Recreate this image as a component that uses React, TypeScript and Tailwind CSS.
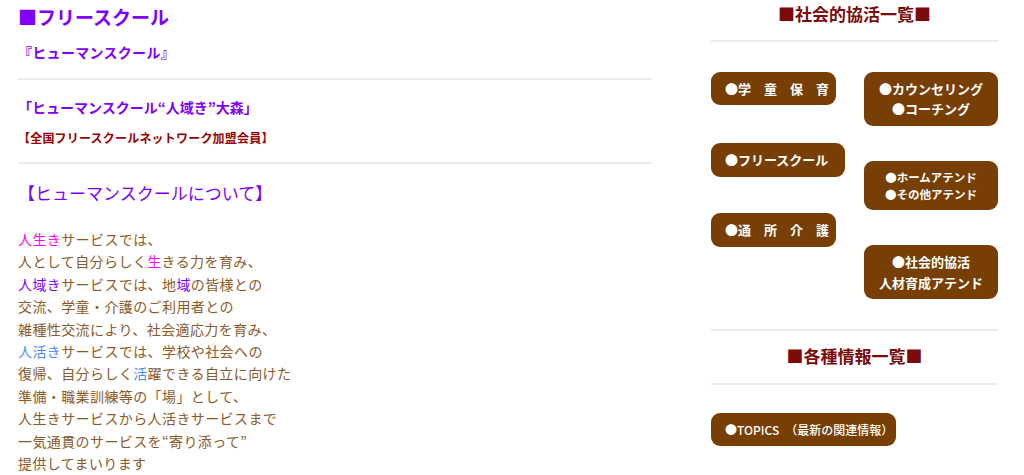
const font = { fontFamily: '"Noto Sans CJK JP", "Noto Sans", sans-serif' };

function Divider({ className = '' }: { className?: string }) {
  return <div className={`h-[2px] bg-[#ececec] ${className}`} />;
}

function Pill({ className = '', children }: { className?: string; children: React.ReactNode }) {
  return (
    <div className={`rounded-[9px] bg-[#783f04] text-white flex flex-col justify-center ${className}`}>
      {children}
    </div>
  );
}

export default function App() {
  return (
    <div className="w-[1024px] h-[475px] bg-white overflow-hidden flex" style={font}>
      {/* main column */}
      <div className="w-[634px] ml-[18px] shrink-0">
        <h1 className="mt-[4px] text-[19px] leading-[26px] font-bold text-[#7f00ff]">■フリースクール</h1>
        <p className="mt-[12px] text-[14px] leading-[20px] font-bold text-[#7f00ff] tracking-[0.3px]">『ヒューマンスクール』</p>
        <Divider className="mt-[16px]" />
        <p className="mt-[17px] text-[14px] leading-[20px] font-bold text-[#7f00ff]">「ヒューマンスクール“人域き”大森」</p>
        <p className="mt-[12px] text-[12px] leading-[18px] font-bold text-[#990000] tracking-[0.2px]">【全国フリースクールネットワーク加盟会員】</p>
        <Divider className="mt-[15px]" />
        <h2 className="mt-[17px] text-[17px] leading-[24px] text-[#7f00ff]">【ヒューマンスクールについて】</h2>
        <div className="mt-[23px] text-[14px] leading-[22.4px] tracking-[0.4px] text-[#8c5a28]">
          <p><span className="text-[#ff00ff]">人生き</span>サービスでは、</p>
          <p>人として自分らしく<span className="text-[#ff00ff]">生</span>きる力を育み、</p>
          <p><span className="text-[#7f00ff]">人域き</span>サービスでは、地<span className="text-[#7f00ff]">域</span>の皆様との</p>
          <p>交流、学童・介護のご利用者との</p>
          <p>雑種性交流により、社会適応力を育み、</p>
          <p><span className="text-[#4d8cff]">人活き</span>サービスでは、学校や社会への</p>
          <p>復帰、自分らしく<span className="text-[#4d8cff]">活</span>躍できる自立に向けた</p>
          <p>準備・職業訓練等の「場」として、</p>
          <p>人生きサービスから人活きサービスまで</p>
          <p>一気通貫のサービスを“寄り添って”</p>
          <p>提供してまいります</p>
        </div>
      </div>

      {/* side column */}
      <div className="w-[287px] ml-[59px] shrink-0">
        <h3 className="mt-[2px] text-center text-[17px] leading-[24px] font-bold text-[#7b0a0a]">■社会的協活一覧■</h3>
        <Divider className="mt-[14px]" />
        <div className="mt-[30px] flex justify-between">
          <div className="flex flex-col font-bold">
            <Pill className="w-[125px] h-[33px] pl-[14px] text-[13px]">●学　童　保　育</Pill>
            <Pill className="w-[134px] h-[34px] mt-[38px] pl-[14px] text-[13px]">●フリースクール</Pill>
            <Pill className="w-[125px] h-[34px] mt-[36px] pl-[14px] text-[13px]">●通　所　介　護</Pill>
          </div>
          <div className="flex flex-col font-bold">
            <Pill className="w-[134px] h-[54px] items-center text-[13px] leading-[20px]">
              <span>●カウンセリング</span>
              <span>●コーチング</span>
            </Pill>
            <Pill className="w-[134px] h-[49px] mt-[35px] items-center text-[11.5px] leading-[17px]">
              <span>●ホームアテンド</span>
              <span>●その他アテンド</span>
            </Pill>
            <Pill className="w-[134px] h-[54px] mt-[35px] items-center text-[13px] leading-[21px]">
              <span>●社会的協活</span>
              <span>人材育成アテンド</span>
            </Pill>
          </div>
        </div>
        <Divider className="mt-[30px]" />
        <h3 className="mt-[13px] text-center text-[17px] leading-[24px] font-bold text-[#7b0a0a]">■各種情報一覧■</h3>
        <Divider className="mt-[15px]" />
        <Pill className="mt-[28px] w-[185px] h-[33px] pl-[14px] text-[12px] font-medium">
          <span>●TOPICS　（最新の関連情報）</span>
        </Pill>
      </div>
    </div>
  );
}
